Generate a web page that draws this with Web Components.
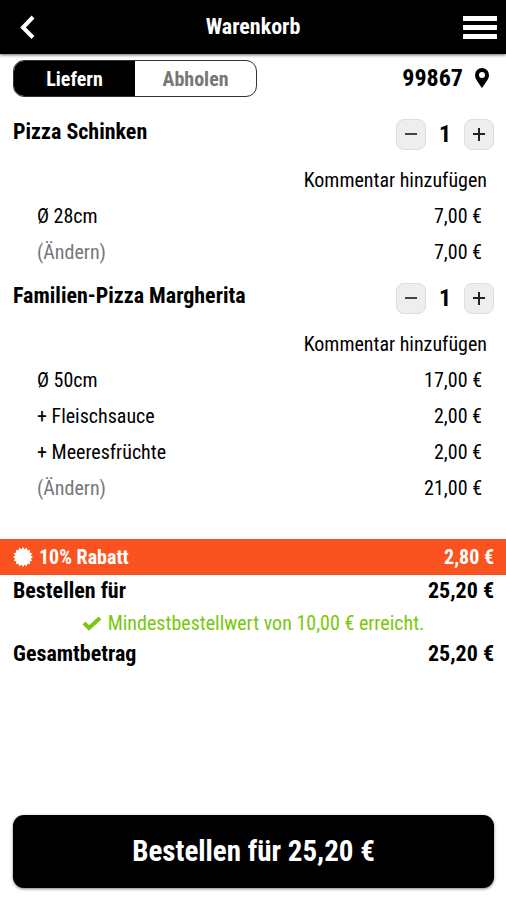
<!DOCTYPE html>
<html lang="de">
<head>
<meta charset="utf-8">
<meta name="viewport" content="width=device-width, initial-scale=1">
<title>Warenkorb</title>
<style>
  :root {
    --ink: #000;
    --muted: #777;
    --accent: #fb531f;
    --ok: #7ac70c;
    --edge: 12px 0 13px;
    --fs-s: 20px;
    --fs-m: 22px;
    --fs-l: 24px;
    --fs-xl: 29px;
  }
  body {
    margin: 0;
    background: #fff;
    color: var(--ink);
    font: 400 var(--fs-s)/1.2 "Roboto Condensed", "Liberation Sans Narrow", Roboto, sans-serif;
  }
</style>
</head>
<body>
<cart-page>
  <cart-header slot="header">Warenkorb</cart-header>
  <cart-delivery zip="99867"></cart-delivery>

  <cart-item name="Pizza Schinken" count="1" total="7,00 €">
    <cart-line price="7,00 €">Ø 28cm</cart-line>
  </cart-item>

  <cart-item name="Familien-Pizza Margherita" count="1" total="21,00 €">
    <cart-line price="17,00 €">Ø 50cm</cart-line>
    <cart-line price="2,00 €">+ Fleischsauce</cart-line>
    <cart-line price="2,00 €">+ Meeresfrüchte</cart-line>
  </cart-item>

  <cart-discount price="2,80 €">10% Rabatt</cart-discount>
  <cart-sum price="25,20 €">Bestellen für</cart-sum>
  <cart-notice>Mindestbestellwert von 10,00 € erreicht.</cart-notice>
  <cart-sum price="25,20 €">Gesamtbetrag</cart-sum>

  <order-button slot="footer">Bestellen für 25,20 €</order-button>
</cart-page>

<script>
const base = `
  *, *::before, *::after { box-sizing: border-box; }
  button { margin: 0; padding: 0; border: 0; background: none; color: inherit; font: inherit; cursor: pointer; }
  svg { display: block; flex: none; }
`;

class CartElement extends HTMLElement {
  connectedCallback() {
    if (this.shadowRoot) return;
    const root = this.attachShadow({ mode: 'open' });
    root.innerHTML = `<style>${base}${this.css()}</style>${this.html()}`;
    this.ready(root);
  }
  attr(name) { return this.getAttribute(name) || ''; }
  css() { return ''; }
  html() { return '<slot></slot>'; }
  ready() {}
}

customElements.define('cart-page', class extends CartElement {
  css() {
    return `
      :host { display: flex; flex-direction: column; min-height: 100vh; }
      main { flex: 1; }
      footer { padding: 12px var(--edge); padding-bottom: 12px; }
    `;
  }
  html() {
    return `
      <slot name="header"></slot>
      <main><slot></slot></main>
      <footer><slot name="footer"></slot></footer>
    `;
  }
});

customElements.define('cart-header', class extends CartElement {
  css() {
    return `
      :host { display: block; background: #000; color: #fff; box-shadow: 0 1px 3px rgba(0,0,0,.6); }
      header { display: grid; grid-template-columns: 48px 1fr 48px; align-items: center; height: 54px; }
      h1 { margin: 0; text-align: center; font-size: var(--fs-m); font-weight: 700; }
      button { display: flex; align-items: center; height: 54px; }
      .back { padding-left: 20px; }
      .menu { justify-content: flex-end; padding-right: 9px; }
    `;
  }
  html() {
    return `
      <header>
        <button class="back" aria-label="Zurück">
          <svg width="15" height="24" viewBox="0 0 15 24" fill="none" stroke="#fff" stroke-width="4"><path d="M13 2 3 12.500l10 10"/></svg>
        </button>
        <h1><slot></slot></h1>
        <button class="menu" aria-label="Menü">
          <svg width="34" height="24" viewBox="0 0 34 24" fill="#fff"><path d="M0 1h34v5H0zM0 10h34v5H0zM0 19h34v5H0z"/></svg>
        </button>
      </header>
    `;
  }
});

customElements.define('cart-delivery', class extends CartElement {
  css() {
    return `
      :host { display: flex; justify-content: space-between; align-items: center; padding: 6px 12px 0 13px; }
      .modes { display: flex; width: 244px; height: 37px; border: 1px solid #333; border-radius: 11px; overflow: hidden; }
      .modes button { flex: 1; color: var(--muted); font-weight: 700; }
      .modes button[aria-pressed="true"] { background: #000; color: #fff; }
      .zip { display: flex; align-items: center; gap: 12px; padding-right: 5px; font-size: var(--fs-l); font-weight: 700; }
    `;
  }
  html() {
    return `
      <div class="modes" role="group" aria-label="Bestellart">
        <button aria-pressed="true">Liefern</button>
        <button aria-pressed="false">Abholen</button>
      </div>
      <button class="zip">
        <span>${this.attr('zip')}</span>
        <svg width="14" height="20" viewBox="0 0 14 20"><path fill-rule="evenodd" d="M7 0a7 7 0 0 1 7 7c0 4-3 7-7 13C3 14 0 11 0 7a7 7 0 0 1 7-7zm0 4a3 3 0 1 0 0 6 3 3 0 0 0 0-6z"/></svg>
      </button>
    `;
  }
  ready(root) {
    const modes = root.querySelectorAll('.modes button');
    modes.forEach(b => b.addEventListener('click', () => {
      modes.forEach(m => m.setAttribute('aria-pressed', m === b));
    }));
  }
});

customElements.define('cart-stepper', class extends CartElement {
  css() {
    return `
      :host { display: flex; align-items: center; font-size: var(--fs-l); font-weight: 700; }
      button { display: flex; align-items: center; justify-content: center; width: 30px; height: 31px; border: 1px solid #ddd; border-radius: 8px; background: #eee; }
      output { width: 38px; text-align: center; }
    `;
  }
  html() {
    return `
      <button aria-label="Weniger"><svg width="12" height="13" viewBox="0 0 12 13" stroke="#444" stroke-width="2"><path d="M0 6h12"/></svg></button>
      <output>${this.attr('value')}</output>
      <button aria-label="Mehr"><svg width="12" height="13" viewBox="0 0 12 13" stroke="#222" stroke-width="2"><path d="M0 6h12M6 0v13"/></svg></button>
    `;
  }
  ready(root) {
    const out = root.querySelector('output');
    const [less, more] = root.querySelectorAll('button');
    less.onclick = () => { out.value = Math.max(0, +out.value - 1); };
    more.onclick = () => { out.value = +out.value + 1; };
  }
});

customElements.define('cart-line', class extends CartElement {
  css() {
    return `
      :host { display: flex; justify-content: space-between; align-items: center; height: 36px; padding: 0 24px 0 37px; }
    `;
  }
  html() {
    return `<span><slot></slot></span><span>${this.attr('price')}</span>`;
  }
});

customElements.define('cart-item', class extends CartElement {
  css() {
    return `
      :host { display: block; margin-top: 12px; }
      :host(:first-of-type) { margin-top: 21px; }
      .head { display: flex; justify-content: space-between; height: 32px; padding: 0 12px 0 13px; }
      h2 { margin: 0; font-size: var(--fs-m); font-weight: 700; line-height: 28px; }
      .comment { display: flex; justify-content: flex-end; align-items: center; height: 36px; margin-top: 12px; padding-right: 19px; }
      .edit { color: var(--muted); }
    `;
  }
  html() {
    return `
      <div class="head">
        <h2>${this.attr('name')}</h2>
        <cart-stepper value="${this.attr('count')}"></cart-stepper>
      </div>
      <div class="comment"><button>Kommentar hinzufügen</button></div>
      <slot></slot>
      <cart-line price="${this.attr('total')}"><button class="edit">(Ändern)</button></cart-line>
    `;
  }
});

customElements.define('cart-discount', class extends CartElement {
  css() {
    return `
      :host { display: flex; align-items: center; gap: 6px; height: 36px; margin-top: 33px; padding: 0 12px 0 13px; background: var(--accent); color: #fff; font-weight: 700; }
      .price { margin-left: auto; }
    `;
  }
  html() {
    // burst with sixteen teeth
    const pts = [];
    for (let i = 0; i < 32; i++) {
      const r = i % 2 ? 8 : 10;
      const a = i * Math.PI / 16;
      pts.push(`${(10 + r * Math.sin(a)).toFixed(2)},${(10 - r * Math.cos(a)).toFixed(2)}`);
    }
    return `
      <svg width="20" height="20" viewBox="0 0 20 20" fill="#fff"><polygon points="${pts.join(' ')}"/></svg>
      <span><slot></slot></span>
      <span class="price">${this.attr('price')}</span>
    `;
  }
});

customElements.define('cart-sum', class extends CartElement {
  css() {
    return `
      :host { display: flex; justify-content: space-between; align-items: center; height: 33px; padding: 0 12px 0 13px; font-size: var(--fs-m); font-weight: 700; }
    `;
  }
  html() {
    return `<span><slot></slot></span><span>${this.attr('price')}</span>`;
  }
});

customElements.define('cart-notice', class extends CartElement {
  css() {
    return `
      :host { display: flex; justify-content: center; align-items: center; gap: 6px; height: 30px; color: var(--ok); }
    `;
  }
  html() {
    return `
      <svg width="20" height="15" viewBox="0 0 20 15" fill="none" stroke="currentColor" stroke-width="4"><path d="M2 7l5 5L18 2"/></svg>
      <span><slot></slot></span>
    `;
  }
});

customElements.define('order-button', class extends CartElement {
  css() {
    return `
      :host { display: block; }
      button { width: 100%; height: 73px; border-radius: 11px; background: #000; color: #fff; font-size: var(--fs-xl); font-weight: 700; box-shadow: 0 1px 3px rgba(0,0,0,.5); }
    `;
  }
  html() {
    return '<button><slot></slot></button>';
  }
});
</script>
</body>
</html>
